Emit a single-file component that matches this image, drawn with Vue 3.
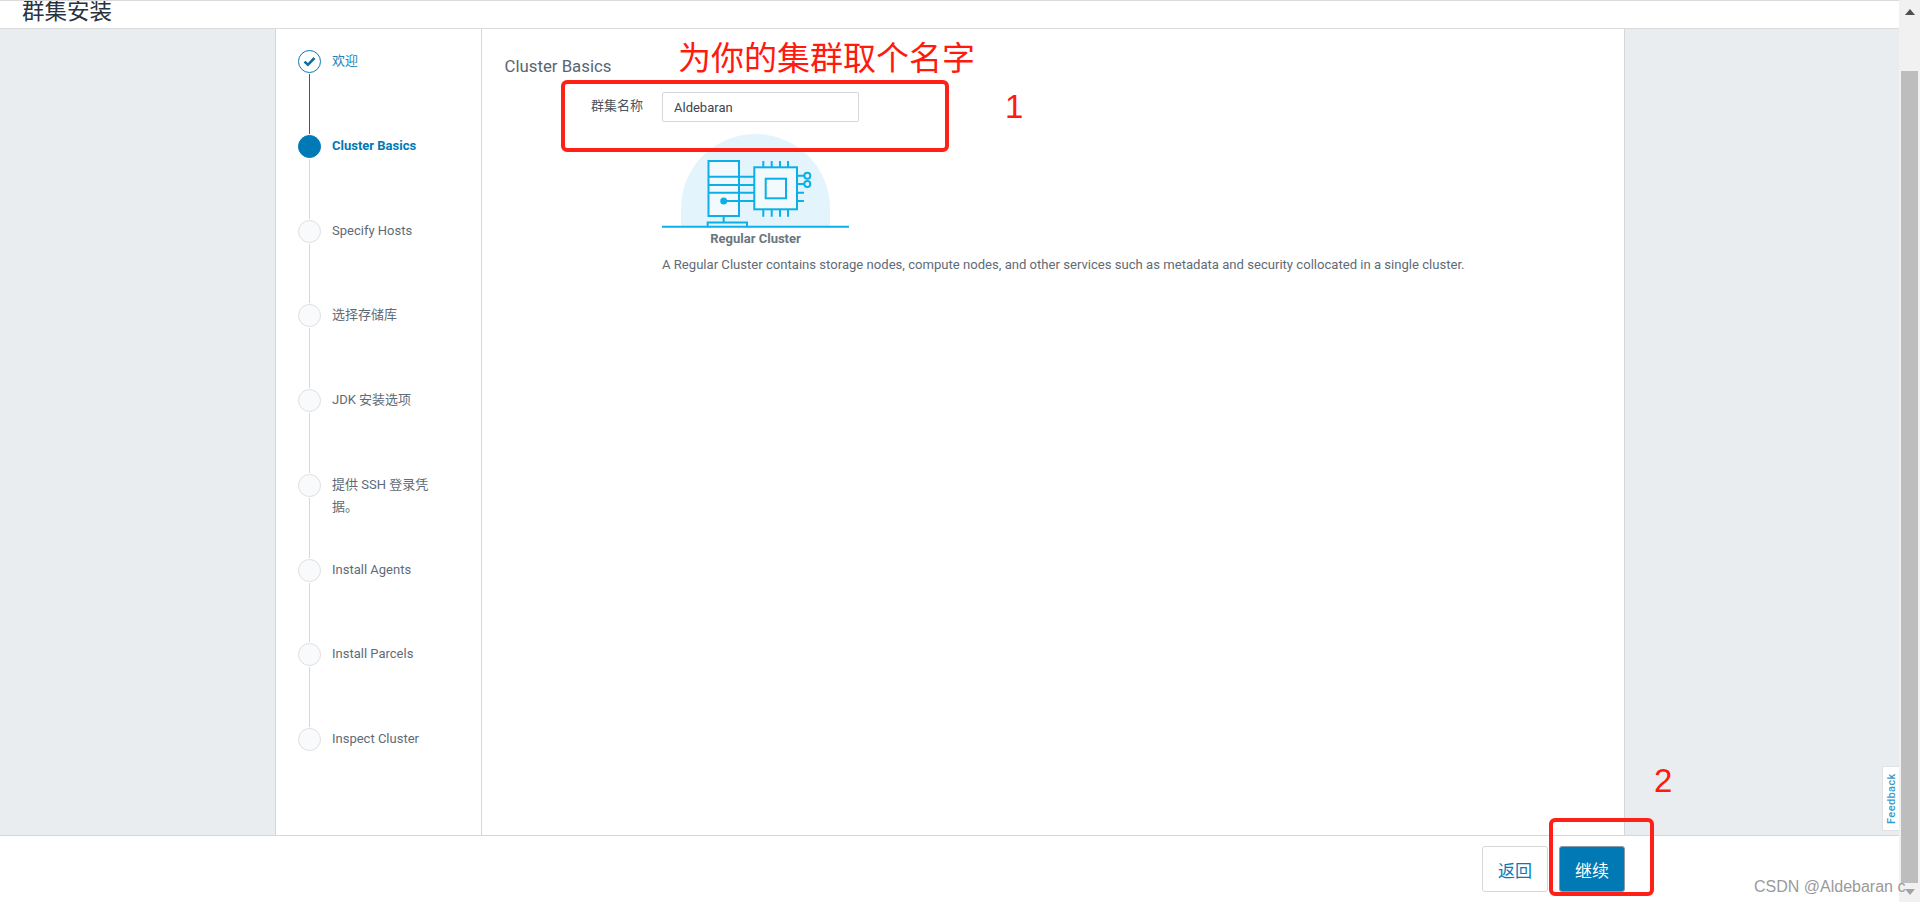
<template>
  <div class="page">
    <div class="main">
      <header class="header">
        <h1 class="header__title">群集安装</h1>
      </header>

      <div class="body">
        <div class="card">
          <aside class="steps">
            <div
              v-for="(step, index) in steps"
              :key="step.label"
              class="step"
              :class="'step--' + step.state"
            >
              <div class="step__rail">
                <span class="step__dot">
                  <svg v-if="step.state === 'done'" width="13" height="11" viewBox="0 0 13 11">
                    <path d="M1.5 5.6l3.4 3.2 6.6-6.8" fill="none" stroke="#0a6ea5" stroke-width="2.6" />
                  </svg>
                </span>
                <span v-if="index < steps.length - 1" class="step__line"></span>
              </div>
              <span class="step__label">{{ step.label }}</span>
            </div>
          </aside>

          <section class="content">
            <h2 class="content__title">Cluster Basics</h2>
            <div class="form-row">
              <label class="form-row__label">群集名称</label>
              <input class="form-row__input" type="text" value="Aldebaran" />
            </div>
            <div class="cluster">
              <svg class="cluster__art" width="187" height="94" viewBox="0 0 187 94">
                <path d="M19 92V74.5a74.5 74.5 0 0 1 149 0V92z" fill="#e3f4fc" />
                <g fill="none" stroke="#0cb0e6" stroke-width="2">
                  <rect x="46.5" y="27" width="30.5" height="55" fill="#f3fafe" />
                  <path d="M46.5 42.7H77M46.5 51H77M46.5 58.7H77" />
                  <path d="M77 42.7h15M77 51h15M77 58.7h15M62 67h30" />
                  <rect x="92.3" y="33.3" width="42.7" height="42" fill="#f3fafe" />
                  <rect x="103.7" y="44.7" width="20.3" height="19.6" />
                  <path d="M101.3 27v6M109.7 27v6M118 27v6M126 27v6" />
                  <path d="M101.3 76v6.7M109.7 76v6.7M118 76v6.7M126 76v6.7" />
                  <path d="M135 41.7h7M135 50h7M135 58.7h7M135 67h7" />
                  <circle cx="145.3" cy="41.7" r="3" />
                  <circle cx="145.3" cy="50" r="3" />
                  <path d="M61.7 82v7M45.7 92v-3.5H85V92" />
                  <path d="M0 92.7h187" />
                </g>
                <circle cx="61.7" cy="67" r="3.5" fill="#0cb0e6" />
              </svg>
              <div class="cluster__name">Regular Cluster</div>
              <p class="cluster__desc">
                A Regular Cluster contains storage nodes, compute nodes, and other services such as metadata and security collocated in a single cluster.
              </p>
            </div>
          </section>
        </div>

        <a class="feedback">Feedback</a>
      </div>

      <footer class="footer">
        <button class="btn btn--back">返回</button>
        <button class="btn btn--next">继续</button>
      </footer>
    </div>

    <div class="scrollbar">
      <span class="scrollbar__arrow scrollbar__arrow--up"></span>
      <span class="scrollbar__thumb"></span>
      <span class="scrollbar__arrow scrollbar__arrow--down"></span>
    </div>

    <!-- annotations drawn over the screenshot -->
    <div class="note note--title">为你的集群取个名字</div>
    <div class="note note--digit note--one">1</div>
    <div class="note note--digit note--two">2</div>
    <div class="mark mark--form"></div>
    <div class="mark mark--btn"></div>
    <div class="watermark">CSDN @Aldebaran c</div>
  </div>
</template>

<script setup>
const steps = [
  { label: '欢迎', state: 'done' },
  { label: 'Cluster Basics', state: 'active' },
  { label: 'Specify Hosts', state: 'todo' },
  { label: '选择存储库', state: 'todo' },
  { label: 'JDK 安装选项', state: 'todo' },
  { label: '提供 SSH 登录凭据。', state: 'todo' },
  { label: 'Install Agents', state: 'todo' },
  { label: 'Install Parcels', state: 'todo' },
  { label: 'Inspect Cluster', state: 'todo' },
]
</script>

<style>
html,
body {
  margin: 0;
  overflow: hidden;
}
</style>

<style scoped>
.page {
  position: relative;
  display: flex;
  height: 902px;
  overflow: hidden;
  font-family: Roboto, "Noto Sans CJK SC", sans-serif;
  color: #5f6b76;
}

.main {
  flex: 1;
  min-width: 0;
  display: flex;
  flex-direction: column;
}

.header {
  height: 27px;
  flex-shrink: 0;
  border-top: 1px solid #dcdcdc;
  border-bottom: 1px solid #d8dadc;
  background: #fff;
  overflow: hidden;
  padding-left: 22px;
}

.header__title {
  margin: -3px 0 0;
  font-size: 22.5px;
  line-height: 26px;
  font-weight: 400;
  color: #27333f;
}

.body {
  position: relative;
  flex: 1;
  min-height: 0;
  display: flex;
  background: #e9edf0;
  padding-left: 275px;
}

.card {
  width: 1350px;
  box-sizing: border-box;
  display: flex;
  background: #fff;
  border-left: 1px solid #d5d8db;
  border-right: 1px solid #d5d8db;
}

.steps {
  width: 206px;
  flex-shrink: 0;
  box-sizing: border-box;
  padding: 21px 0 0 22px;
  border-right: 1px solid #d5d8db;
}

.step {
  display: flex;
  height: 84.75px;
  gap: 11px;
}

.step__rail {
  width: 23px;
  display: flex;
  flex-direction: column;
  align-items: center;
  flex-shrink: 0;
}

.step__dot {
  width: 23px;
  height: 23px;
  box-sizing: border-box;
  flex-shrink: 0;
  display: flex;
  align-items: center;
  justify-content: center;
  border-radius: 50%;
  border: 1px solid #dcdfe2;
  background: #f9fafc;
}

.step__line {
  flex: 1;
  width: 1px;
  margin: 1px 0;
  background: #d5d8db;
}

.step--done .step__dot {
  border-color: #0a7ab5;
  background: #fff;
}

.step--done .step__line {
  background: #0a6ea5;
}

.step--active .step__dot {
  border-color: #0079b5;
  background: #0079b5;
}

.step__label {
  width: 100px;
  font-size: 13px;
  line-height: 22px;
}

.step--done .step__label {
  color: #1a84bb;
}

.step--active .step__label {
  color: #0079b5;
  font-weight: 700;
}

.content {
  flex: 1;
  padding: 27px 0 0 22.5px;
}

.content__title {
  margin: 0 0 16px;
  font-size: 16.8px;
  line-height: 20px;
  font-weight: 400;
  color: #5a6570;
}

.form-row {
  display: flex;
  gap: 19px;
}

.form-row__label {
  width: 138.5px;
  text-align: right;
  font-size: 13px;
  line-height: 28px;
  color: #4a545e;
}

.form-row__input {
  width: 197px;
  height: 30px;
  box-sizing: border-box;
  padding: 0 11px;
  border: 1px solid #d5d8db;
  border-radius: 2px;
  font-family: inherit;
  font-size: 13px;
  color: #3c4650;
  background: #fff;
}

.cluster {
  margin: 12px 0 0 157.5px;
}

.cluster__art {
  display: block;
}

.cluster__name {
  width: 187px;
  margin-top: 2px;
  text-align: center;
  font-size: 13px;
  line-height: 18px;
  font-weight: 700;
  color: #6b7680;
}

.cluster__desc {
  margin: 8px 0 0;
  font-size: 13.1px;
  line-height: 18px;
  color: #5f6b76;
}

.feedback {
  position: absolute;
  right: 0;
  top: 737px;
  width: 17px;
  height: 65px;
  box-sizing: border-box;
  display: flex;
  align-items: center;
  justify-content: center;
  border: 1px solid #dfe2e5;
  border-left: 0;
  background: #fff;
  writing-mode: vertical-rl;
  transform: rotate(180deg);
  font-size: 11px;
  font-weight: 500;
  letter-spacing: 0.4px;
  color: #3a9ac9;
}

.footer {
  height: 67px;
  flex-shrink: 0;
  box-sizing: border-box;
  display: flex;
  justify-content: flex-end;
  gap: 11px;
  padding: 10px 274px 0 0;
  border-top: 1px solid #d5d8db;
  background: #fff;
}

.btn {
  width: 66px;
  height: 46px;
  box-sizing: border-box;
  border-radius: 3px;
  font-family: inherit;
  font-size: 17px;
}

.btn--back {
  border: 1px solid #d5d8db;
  background: #fff;
  color: #0a7ab5;
}

.btn--next {
  border: 1px solid #8a9aa8;
  background: #0079b5;
  color: #fff;
}

.scrollbar {
  width: 21px;
  flex-shrink: 0;
  display: flex;
  flex-direction: column;
  align-items: center;
  background: #f1f1f1;
}

.scrollbar__arrow {
  flex-shrink: 0;
  width: 0;
  height: 0;
  border-left: 5px solid transparent;
  border-right: 5px solid transparent;
}

.scrollbar__arrow--up {
  margin: 9px 0 56px;
  border-bottom: 6px solid #505050;
}

.scrollbar__arrow--down {
  margin: 6px 0 7px;
  border-top: 6px solid #a3a3a3;
}

.scrollbar__thumb {
  flex: 1;
  width: 17px;
  background: #bdbdbd;
}

.note {
  position: absolute;
  font-family: "Noto Sans CJK SC", sans-serif;
  color: #ff1a10;
  white-space: nowrap;
  font-size: 33px;
  line-height: 46px;
}

.note--digit {
  font-family: "Liberation Sans", sans-serif;
}

.note--title {
  left: 678px;
  top: 33px;
}

.note--one {
  left: 1005px;
  top: 84px;
}

.note--two {
  left: 1654px;
  top: 758px;
}

.mark {
  position: absolute;
  box-sizing: border-box;
  border: 4px solid #ff2018;
  border-radius: 6px;
}

.mark--form {
  left: 561px;
  top: 80px;
  width: 388px;
  height: 72px;
}

.mark--btn {
  left: 1549px;
  top: 818px;
  width: 105px;
  height: 78px;
}

.watermark {
  position: absolute;
  left: 1754px;
  top: 877px;
  font-family: "Liberation Sans", sans-serif;
  font-size: 16px;
  line-height: 20px;
  color: #9a9a9a;
  white-space: nowrap;
}
</style>
